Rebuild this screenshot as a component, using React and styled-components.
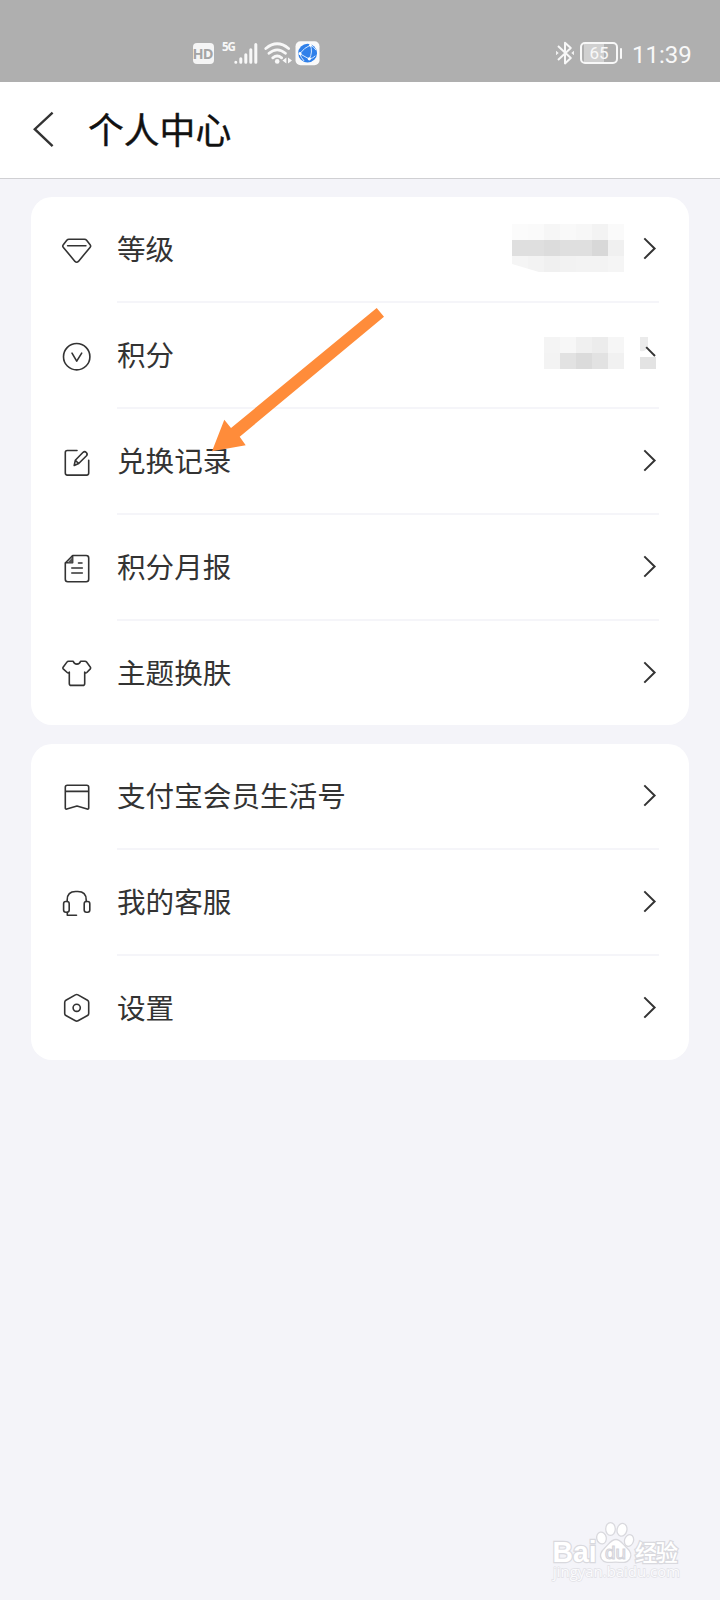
import React from 'react';
import styled, { createGlobalStyle } from 'styled-components';

const Global = createGlobalStyle`
  * { box-sizing: border-box; }
  body { margin: 0; background: #f4f4f9; font-family: Roboto, "Noto Sans CJK SC", sans-serif; }
`;

const Screen = styled.main`
  position: relative;
  width: 720px;
  height: 1600px;
  overflow: hidden;
  background: #f4f4f9;
`;

const StatusBar = styled.div`
  display: flex;
  align-items: center;
  justify-content: space-between;
  height: 82px;
  padding: 24px 28px 0 193px;
  background: #afafaf;
  color: #f8f8f8;
`;

const StatusGroup = styled.div`
  display: flex;
  align-items: center;
  height: 32px;
`;

const HdBadge = styled.span`
  width: 21px;
  height: 21px;
  border-radius: 4px;
  background: #f5f5f5;
  color: #a4a4a4;
  font: 700 14.5px/22px "Open Sans", sans-serif;
  text-align: center;
  letter-spacing: -0.8px;
  text-indent: -2px;
  white-space: nowrap;
`;

const NetLabel = styled.span`
  width: 12px;
  margin: -13px 0 0 8px;
  font: 700 11.5px/14px "Open Sans", sans-serif;
  letter-spacing: -1.2px;
`;

const StatusIcon = styled.svg`
  flex: none;
  margin-left: ${(p) => p.$gap || 0}px;
`;

const Battery = styled.span`
  width: 38px;
  height: 22px;
  margin-left: 6px;
  border: 2px solid #f8f8f8;
  border-radius: 5px;
  background: linear-gradient(90deg, #afafaf 2px, #d0d0d0 2px 22px, #afafaf 22px);
  font-size: 17px;
  line-height: 19px;
  text-align: center;
`;

const BatteryCap = styled.span`
  width: 2px;
  height: 11px;
  margin-left: 2px;
  border-radius: 1px;
  background: #f8f8f8;
`;

const Clock = styled.time`
  width: 60px;
  margin: 3px 0 0 10px;
  font-size: 24px;
  line-height: 28px;
  white-space: nowrap;
`;

const Header = styled.header`
  display: flex;
  align-items: center;
  height: 97px;
  padding-left: 30px;
  background: #fff;
  border-bottom: 1px solid #d0d0d3;
`;

const Title = styled.h1`
  margin: -5px 0 0 30px;
  color: #111;
  font: 400 35.8px/52px "Noto Sans CJK SC", sans-serif;
  -webkit-text-stroke: 0.4px #111;
`;

const Groups = styled.div`
  display: flex;
  flex-direction: column;
  gap: 19px;
  padding: 18px 31px 0;
`;

const Card = styled.section`
  border-radius: 21px;
  background: #fff;
`;

const Row = styled.div`
  display: flex;
  align-items: center;
  height: 106px;
  padding: 0 30px 0 29px;
  &:last-child { height: 104px; }
`;

const RowIcon = styled.svg`
  flex: none;
  margin: -1px 24px 0 0;
  fill: none;
  stroke: #333;
  stroke-width: 1.6;
  stroke-linecap: round;
  stroke-linejoin: round;
`;

const RowBody = styled.div`
  display: flex;
  flex: 1;
  align-items: center;
  height: 100%;
  border-bottom: 2px solid #f5f5f9;
  ${Row}:last-child & { border-bottom: 0; }
`;

const Label = styled.span`
  flex: 1;
  margin-top: -3px;
  color: #333;
  font: 400 28.6px/42px "Noto Sans CJK SC", sans-serif;
`;

const ChevronSlot = styled.div`
  position: relative;
  width: 18px;
  height: 24px;
`;

const Mosaic = styled.div`
  display: grid;
  grid-template-columns: repeat(${(p) => p.$cols}, 16px);
  grid-auto-rows: 16px;
  margin-right: 17px;
  margin-top: ${(p) => p.$lift || 0}px;
  clip-path: ${(p) => p.$clip || 'none'};
`;

const Tile = styled.i`
  background: ${(p) => p.$tone};
`;

const Smudge = styled.svg`
  position: absolute;
  left: 0;
  top: 0;
  overflow: visible;
`;

const Pointer = styled.svg`
  position: absolute;
  left: 205px;
  top: 300px;
`;

const Watermark = styled.div`
  position: absolute;
  left: 550px;
  top: 1520px;
  width: 140px;
  height: 64px;
`;

const Icons = {
  diamond: <><path d="M9 5.3h15.5q1.3 0 2.1 1l3.7 4.8q.8 1.1-.1 2.1l-11.8 14.2q-1.7 1.8-3.4 0L3.2 13.2q-.9-1-.1-2.1l3.7-4.8q.8-1 2.2-1Z" /><path d="M7.6 11.7h18.3" /></>,
  points: <><circle cx="16.7" cy="16.7" r="13.2" /><path d="m12 13.2 4.7 8 5-8" /></>,
  edit: <><path d="M17 4.5H7.3q-2 0-2 2v20.6q0 2 2 2h19.4q2 0 2-2V14.3" /><path d="m14.2 19.5 1.1-5.2 7.8-8q1.6-1.3 3.2.2t.2 3.2l-7.8 7.8-4.5 2Zm1.1-5.2 3.4 3.2" /></>,
  report: <><path d="M12.7 3.5h13.5q2.5 0 2.5 2.5v21.3q0 2.5-2.5 2.5H7.8q-2.5 0-2.5-2.5V11Z" /><path d="M12.6 3.8v7H5.6M18.5 11H22M11.8 16h10.5M11.8 21h10.5" /><path d="M12.6 5v5.8H7.5Z" fill="#555" stroke="none" /></>,
  shirt: <path d="M13.2 4.3c1.2 3.8 6.2 3.8 7.4 0H25q1 0 1.6.8l3.8 5.2q.6.8-.1 1.6l-3.5 3.6q-1.2 1.1-2.1-.4v11.3q0 2-2 2H11.3q-2 0-2-2V15.1q-.9 1.5-2.1.4l-4-3.6q-.7-.8-.1-1.6l3.8-5.2q.6-.8 1.6-.8Z" />,
  bookmark: <><path d="M7.3 4.2h19.4q2 0 2 2v20.7q0 1.6-1.5 1.1L17 25.1 6.8 28q-1.5.5-1.5-1.1V6.2q0-2 2-2ZM5.3 10.4h23.4" /></>,
  headset: <><path d="M7.2 14.5v-1.6q0-8.4 8.4-8.4h2.2q8.4 0 8.4 8.4v1.6M7.3 25.3v3h9.2" /><rect x="3.6" y="14.5" width="5.6" height="10.8" rx="2.2" /><rect x="24.2" y="14.5" width="5.6" height="10.8" rx="2.2" /></>,
  settings: <><path d="M15.4 2.9q1.3-.7 2.6 0l9.5 5.4q1.2.7 1.2 2.1v11q0 1.4-1.2 2.1L18 28.8q-1.3.7-2.6 0l-9.5-5.3q-1.2-.7-1.2-2.1v-11q0-1.4 1.2-2.1Z" /><circle cx="16.7" cy="15.8" r="3.6" /></>,
};

const LEVEL_TONES = [
  '#fbfbfb', '#fafafa', '#f6f6f6', '#f9f9f9', '#f7f7f7', '#f3f3f3', '#fafafa',
  '#dfdfdf', '#dfdfdf', '#dcdcdc', '#dfdfdf', '#dfdfdf', '#d8d8d8', '#f0f0f0',
  '#f5f5f5', '#f3f3f3', '#f0f0f0', '#f2f2f2', '#f3f3f3', '#f3f3f3', '#f5f5f5',
];
const POINT_TONES = [
  '#f4f4f4', '#f7f7f7', '#f0f0f0', '#ececec', '#f6f6f6',
  '#f3f3f3', '#e2e2e2', '#dbdbdb', '#e2e2e2', '#f1f1f1',
];

const MENU = [
  [
    { icon: 'diamond', label: '等级', tones: LEVEL_TONES, cols: 7, lift: -2, clip: 'polygon(0 0, 100% 0, 100% 100%, 27px 100%, 0 40px)' },
    { icon: 'points', label: '积分', tones: POINT_TONES, cols: 5, lift: -4, smudged: true },
    { icon: 'edit', label: '兑换记录' },
    { icon: 'report', label: '积分月报' },
    { icon: 'shirt', label: '主题换肤' },
  ],
  [
    { icon: 'bookmark', label: '支付宝会员生活号' },
    { icon: 'headset', label: '我的客服' },
    { icon: 'settings', label: '设置' },
  ],
];

function Chevron({ smudged }) {
  return (
    <ChevronSlot>
      <Smudge width="18" height="24" viewBox="0 0 18 24">
        {smudged ? (
          <>
            <path d="M-1-6h8v10Q5 9-1 8Z" fill="#ebebeb" />
            <path d="m5.2 4.2 8.8 8.8" stroke="#333" strokeWidth="1.9" />
            <path d="M-1 14h16v12H-1Z" fill="#e3e3e3" />
          </>
        ) : (
          <path d="m3.3 1.4 10.3 10.1L3.3 21.6" fill="none" stroke="#333" strokeWidth="2" />
        )}
      </Smudge>
    </ChevronSlot>
  );
}

function MenuRow({ icon, label, tones, cols, lift, clip, smudged }) {
  return (
    <Row>
      <RowIcon width="33" height="32" viewBox="0 0 33 32">{Icons[icon]}</RowIcon>
      <RowBody>
        <Label>{label}</Label>
        {tones && (
          <Mosaic $cols={cols} $lift={lift} $clip={clip}>
            {tones.map((tone, i) => <Tile key={i} $tone={tone} />)}
          </Mosaic>
        )}
        <Chevron smudged={smudged} />
      </RowBody>
    </Row>
  );
}

function Status() {
  return (
    <StatusBar>
      <StatusGroup>
        <HdBadge>HD</HdBadge>
        <NetLabel>5G</NetLabel>
        <StatusIcon width="24" height="24" viewBox="0 0 24 24" stroke="#f8f8f8" strokeWidth="3" strokeLinecap="round">
          <path d="M1.8 21.2v0M6.8 21.2v-3.4M11.8 21.2v-7.5M16.8 21.2V8.7M21.8 21.2V3.5" />
        </StatusIcon>
        <StatusIcon $gap={6} width="28" height="24" viewBox="0 0 28 24" fill="none" stroke="#f8f8f8" strokeWidth="2.8" strokeLinecap="round">
          <path d="M1.8 7.5q11.4-9.4 22.8 0M5 12.3q8.2-6.9 16.4 0M8.8 16.8q4.4-3.6 8.8 0" />
          <circle cx="13.2" cy="20.4" r="2.3" fill="#f8f8f8" stroke="none" />
          <path d="M22.4 16.5v6l-4-3ZM24 16.5v6l4-3Z" fill="#f8f8f8" stroke="none" />
        </StatusIcon>
        <StatusIcon $gap={3} width="25" height="25" viewBox="0 0 25 25">
          <rect width="24" height="24" x=".5" y=".3" rx="5" fill="#fafafa" />
          <circle cx="12.6" cy="12.2" r="9.4" fill="#2f80ea" />
          <g fill="none" stroke="#d5e8ff" strokeWidth="1">
            <path d="M15.4 4.1Q9.5 6.5 4.7 12.7L14.3 18Q18 11 15.4 4.1ZM15.4 4.1q3.6 2 5.8 5.2M14.3 18q4-.8 6-3.2M4.7 12.7q1 3.6 4.5 7.4" />
          </g>
          <g fill="#fff"><circle cx="15.4" cy="4.3" r="1.4" /><circle cx="5" cy="12.6" r="1.5" /><circle cx="14.3" cy="17.8" r="1.6" /></g>
        </StatusIcon>
      </StatusGroup>
      <StatusGroup>
        <StatusIcon width="18" height="24" viewBox="0 0 18 24" fill="none" stroke="#f8f8f8" strokeWidth="2" strokeLinejoin="round">
          <path d="m2 5 12.8 12.1L9 22.4V1.7l5.8 5.2L2 19" />
          <path d="M.2 10.3 2.3 12 .2 13.7ZM17.8 10.3 15.7 12l2.1 1.7Z" fill="#f8f8f8" strokeWidth=".6" />
        </StatusIcon>
        <Battery>65</Battery>
        <BatteryCap />
        <Clock>11:39</Clock>
      </StatusGroup>
    </StatusBar>
  );
}

function BaiduMark() {
  return (
    <Watermark>
      <svg width="140" height="64" viewBox="0 0 140 64" fill="#fff" stroke="#d9d9de" strokeWidth="1.3">
        <g paintOrder="stroke" strokeWidth="2.4" fontWeight="700">
          <text x="2.5" y="42" fontSize="29" fontFamily="Liberation Sans, sans-serif" textLength="44" lengthAdjust="spacingAndGlyphs">Bai</text>
          <text x="85" y="41" fontSize="22.5" fontFamily="Noto Sans CJK SC, sans-serif" fontWeight="500" textLength="43">经验</text>
        </g>
        <ellipse cx="51.5" cy="18" rx="4.8" ry="6" transform="rotate(-12 51.5 18)" />
        <ellipse cx="60.5" cy="9" rx="4.8" ry="6.4" />
        <ellipse cx="72" cy="9.8" rx="4.9" ry="6.4" transform="rotate(14 72 9.8)" />
        <ellipse cx="79" cy="20.5" rx="4.5" ry="6" transform="rotate(18 79 20.5)" />
        <path d="M66 19.5c4.5 0 6.5 4.5 10.5 8 4.5 4 5.5 8 3.2 11.7-3.2 4.7-8.2 3-14.2 3s-11 1.5-14-3c-2.5-4-.8-7.5 3.5-11.5 4-3.8 6-8.2 11-8.2Z" />
        <text x="55" y="39" fontSize="19" fontFamily="Liberation Sans, sans-serif" textLength="21" lengthAdjust="spacingAndGlyphs" fill="#f4f4f9" stroke="#d4d4da" strokeWidth="1.1">du</text>
        <text x="3" y="57" fontSize="14.5" fontFamily="Open Sans, sans-serif" textLength="127" lengthAdjust="spacingAndGlyphs" fill="#fbfbfd" stroke="#e1e1e6" strokeWidth="1.3" paintOrder="stroke">jingyan.baidu.com</text>
      </svg>
    </Watermark>
  );
}

export default function App() {
  return (
    <Screen>
      <Global />
      <Status />
      <Header>
        <svg width="28" height="40" viewBox="0 0 28 40" fill="none" stroke="#333" strokeWidth="2.4">
          <path d="M22.6 2.6 4.8 19.2l17.8 16.9" />
        </svg>
        <Title>个人中心</Title>
      </Header>
      <Groups>
        {MENU.map((group, i) => (
          <Card key={i}>
            {group.map((item) => <MenuRow key={item.icon} {...item} />)}
          </Card>
        ))}
      </Groups>
      <Pointer width="185" height="160" viewBox="205 300 185 160">
        <path d="m212 451.3 12.3-31.6 6.7 8.3L376.7 308l7.3 8.7-144.3 120 6 8.6Z" fill="#ff8c3a" />
      </Pointer>
      <BaiduMark />
    </Screen>
  );
}
